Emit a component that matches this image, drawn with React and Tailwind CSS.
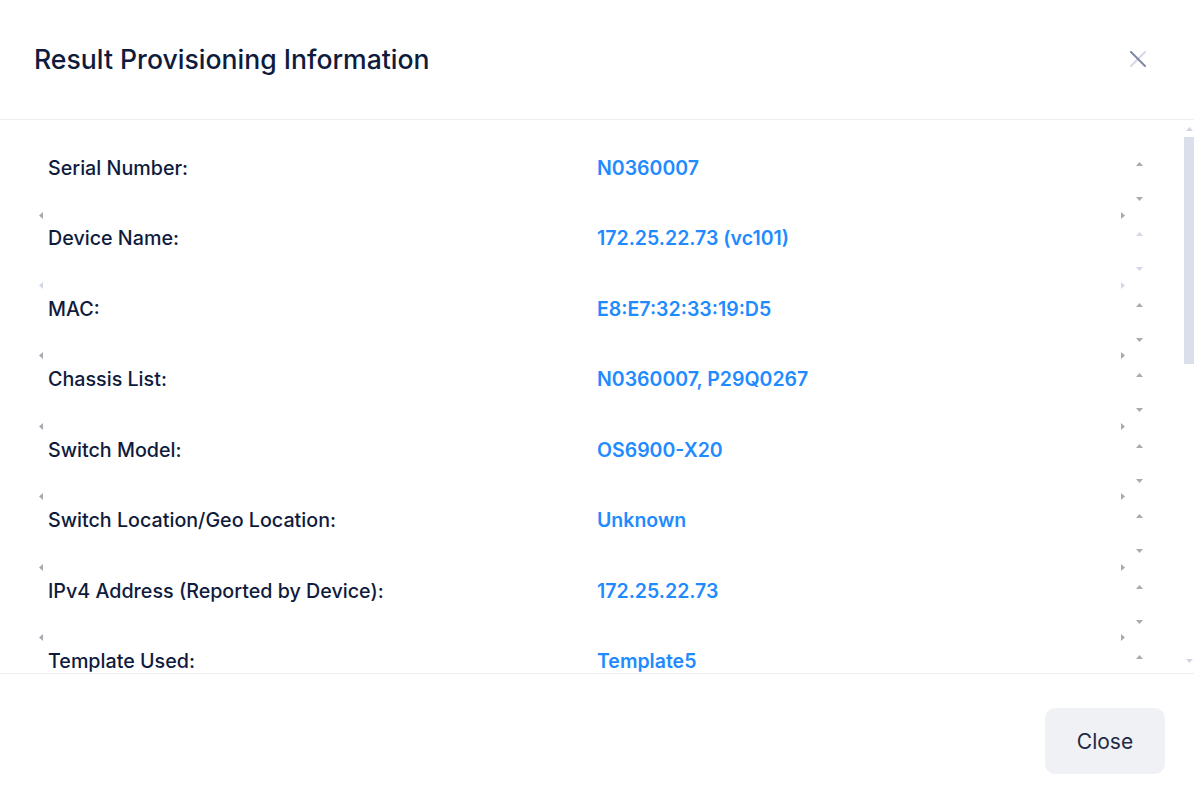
import React from "react";

const rows = [
  ["Serial Number:", "N0360007"],
  ["Device Name:", "172.25.22.73 (vc101)"],
  ["MAC:", "E8:E7:32:33:19:D5"],
  ["Chassis List:", "N0360007, P29Q0267"],
  ["Switch Model:", "OS6900-X20"],
  ["Switch Location/Geo Location:", "Unknown"],
  ["IPv4 Address (Reported by Device):", "172.25.22.73"],
  ["Template Used:", "Template5"],
];

function Up({ c }) {
  return (
    <svg width="7" height="4" viewBox="0 0 7 4" className="block shrink-0">
      <polygon points="0,4 3.5,0 7,4" fill={c} />
    </svg>
  );
}
function Down({ c }) {
  return (
    <svg width="7" height="4" viewBox="0 0 7 4" className="block shrink-0">
      <polygon points="0,0 7,0 3.5,4" fill={c} />
    </svg>
  );
}
function Left({ c }) {
  return (
    <svg width="4" height="7" viewBox="0 0 4 7" className="block shrink-0">
      <polygon points="4,0 0,3.5 4,7" fill={c} />
    </svg>
  );
}
function Right({ c }) {
  return (
    <svg width="4" height="7" viewBox="0 0 4 7" className="block shrink-0">
      <polygon points="0,0 4,3.5 0,7" fill={c} />
    </svg>
  );
}

function Row({ label, value, light }) {
  const c = light ? "#d3d8e6" : "#a9a9b2";
  return (
    <div className="h-[70.43px] shrink-0 flex flex-col">
      <div className="flex h-[50px]">
        <div className="flex-1 flex items-start -mt-[2px]">
          <div className="w-[559px] shrink-0 pl-[10px] text-[19.7px] leading-[24px] font-medium text-[#0f1b3d] whitespace-nowrap">
            {label}
          </div>
          <div className="flex-1 text-[19.5px] leading-[24px] font-semibold text-[#1f8bff] whitespace-nowrap">
            {value}
          </div>
        </div>
        <div className="w-[13px] flex flex-col items-center pt-[4px] pb-[7px] justify-between">
          <Up c={c} />
          <Down c={c} />
        </div>
      </div>
      <div className="h-[14px] flex items-center justify-between pl-[1px] pr-[21px]">
        <Left c={c} />
        <Right c={c} />
      </div>
    </div>
  );
}

export default function App() {
  return (
    <div
      className="w-full h-[804px] bg-white flex flex-col overflow-hidden"
      style={{ fontFamily: "Inter, 'Noto Sans', sans-serif" }}
    >
      <div className="h-[120px] shrink-0 border-b border-[#eceef2] flex items-center justify-between pl-[34px] pr-[48px] pb-[2px]">
        <h1 className="text-[26.6px] font-medium text-[#0f1b3d] leading-[32px]">
          Result Provisioning Information
        </h1>
        <button className="w-[16px] h-[16px] flex items-center justify-center">
          <svg width="16" height="16" viewBox="0 0 16 16">
            <line x1="1" y1="15" x2="15" y2="1" stroke="#d5d9e4" strokeWidth="2" strokeLinecap="round" />
            <line x1="1" y1="1" x2="15" y2="15" stroke="#7f88a3" strokeWidth="2" strokeLinecap="round" />
          </svg>
        </button>
      </div>

      <div className="h-[553px] shrink-0 flex">
        <div className="flex-1 overflow-hidden pt-[38px] pl-[38px] pr-[38px] flex flex-col">
          {rows.map(([l, v], i) => (
            <Row key={l} label={l} value={v} light={i === 1} />
          ))}
        </div>
        <div className="w-[10px] shrink-0 flex flex-col items-center">
          <div className="h-[17px] flex items-center justify-center pt-[1px]">
            <Up c="#d0d5e2" />
          </div>
          <div className="w-[10px] h-[227px] bg-[#dadfeb]" />
          <div className="flex-1" />
          <div className="h-[16px] flex items-start justify-center pt-[2px]">
            <Down c="#d0d5e2" />
          </div>
        </div>
      </div>

      <div className="flex-1 border-t border-[#eceef2] flex justify-end items-start pt-[34px] pr-[29px]">
        <button className="w-[120px] h-[66px] rounded-[10px] bg-[#f0f1f4] text-[21px] leading-[28px] text-[#1f2a44] pt-[2px]">
          Close
        </button>
      </div>
    </div>
  );
}
